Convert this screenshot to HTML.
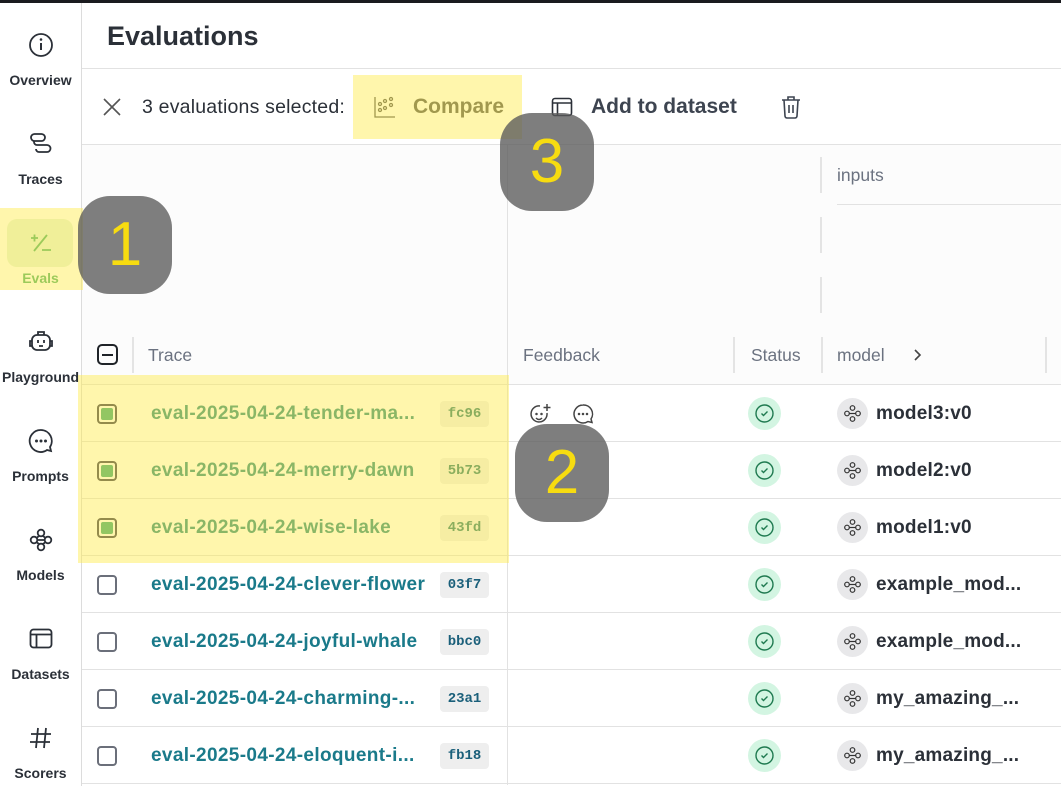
<!DOCTYPE html>
<html><head><meta charset="utf-8"><style>
*{box-sizing:border-box;margin:0;padding:0}
body{width:1061px;height:786px;overflow:hidden;background:#fff;font-family:"Liberation Sans",sans-serif;position:relative;color:#2b3038}
.abs{position:absolute}
.top{left:0;top:0;width:1061px;height:3px;background:#1a1b1f}
.side{left:0;top:3px;width:82px;height:783px;border-right:1px solid #dcdcdc}
.nav{position:absolute;left:0;width:81px;text-align:center;font-size:14px;font-weight:bold;color:#2b3038}
.nav svg{display:block;margin:0 auto 14px}
.hline{position:absolute;height:1px;background:#e2e2e2}
.vline{position:absolute;width:2px;background:#e4e4e4}
.hdr{font-size:17.5px;color:#6b7280}
.row{position:absolute;left:82px;width:979px;height:57px;border-bottom:1px solid #e2e2e2}
.cb{position:absolute;left:97px;width:20px;height:20px;border:2px solid #6b6f7a;border-radius:4px}
.name{position:absolute;left:151px;font-size:19px;letter-spacing:0.35px;font-weight:bold;color:#1a7a8a}
.tag{position:absolute;left:440px;width:49px;height:26px;background:#eeeeee;border-radius:4px;font-family:"Liberation Mono",monospace;font-size:14px;font-weight:bold;color:#1a5f7a;text-align:center;line-height:26px}
.st{position:absolute;left:748px;width:33px;height:33px;border-radius:50%;background:#d3f5e2}
.mi{position:absolute;left:837px;width:31px;height:31px;border-radius:50%;background:#e8e8ea}
.mn{position:absolute;left:876px;font-size:19px;letter-spacing:0.2px;font-weight:bold;color:#2b3038}
.hl{position:absolute;background:rgba(255,234,70,0.45)}
.badge{position:absolute;width:94px;height:98px;border-radius:32px;background:rgba(90,90,90,0.78);color:#f7dc10;font-size:62px;text-align:center;line-height:98px}
</style></head><body>
<div class="abs top"></div>
<div class="abs side"></div>

<div class="nav" style="top:32px"><svg width="26" height="26" viewBox="0 0 26 26"><circle cx="13" cy="13" r="11" fill="none" stroke="#2b3038" stroke-width="1.8"/><line x1="13" y1="11" x2="13" y2="18" stroke="#2b3038" stroke-width="2"/><circle cx="13" cy="7.5" r="1.3" fill="#2b3038"/></svg>Overview</div>
<div class="nav" style="top:131px"><svg width="26" height="26" viewBox="0 0 26 26" fill="none" stroke="#2b3038" stroke-width="1.8"><rect x="3" y="3" width="14" height="7" rx="3.5"/><path d="M6 10v1a3 3 0 0 0 3 3h10a3.5 3.5 0 0 1 0 7H11a3 3 0 0 1-3-3"/></svg>Traces</div>
<div class="abs" style="left:7px;top:219px;width:66px;height:48px;border-radius:10px;background:#e3f3dc"></div>
<div class="nav" style="top:230px;color:#4caf6a"><svg width="26" height="26" viewBox="0 0 26 26" fill="none" stroke="#4caf6a" stroke-width="1.8"><path d="M3 8h7M6.5 4.5v7M19 5L6 21M14 20h9"/></svg>Evals</div>
<div class="nav" style="top:329px"><svg width="28" height="26" viewBox="0 0 28 26" fill="none" stroke="#2b3038" stroke-width="1.8"><rect x="5" y="6" width="18" height="15" rx="5"/><path d="M11 6V3h6v3M5 12H3v5h2M23 12h2v5h-2M11 11v3M17 11v3M12 17h4"/></svg>Playground</div>
<div class="nav" style="top:428px"><svg width="26" height="26" viewBox="0 0 26 26" fill="none" stroke="#2b3038" stroke-width="1.8"><path d="M13 2a11 11 0 1 0 6 20l4 1-1-4A11 11 0 0 0 13 2z"/><circle cx="8.5" cy="13" r="0.6" fill="#2b3038"/><circle cx="13" cy="13" r="0.6" fill="#2b3038"/><circle cx="17.5" cy="13" r="0.6" fill="#2b3038"/></svg>Prompts</div>
<div class="nav" style="top:527px"><svg width="26" height="26" viewBox="0 0 26 26" fill="none" stroke="#2b3038" stroke-width="1.8"><circle cx="13" cy="6" r="3.3"/><circle cx="13" cy="20" r="3.3"/><circle cx="6" cy="13" r="3.3"/><circle cx="20" cy="13" r="3.3"/><path d="M9.3 13h7.4M11 9l-2 1.5M15 9l2 1.5M11 17l-2-1.5M15 17l2-1.5"/></svg>Models</div>
<div class="nav" style="top:626px"><svg width="26" height="26" viewBox="0 0 26 26" fill="none" stroke="#2b3038" stroke-width="1.8"><rect x="2.5" y="3.5" width="21" height="18" rx="3"/><path d="M2.5 8.5h21M8.5 8.5v13"/></svg>Datasets</div>
<div class="nav" style="top:725px"><svg width="26" height="26" viewBox="0 0 26 26" fill="none" stroke="#2b3038" stroke-width="1.8"><path d="M10 3L8 23M18 3l-2 20M3 9h20M2 17h20"/></svg>Scorers</div>

<div class="abs" style="left:107px;top:21px;font-size:27px;font-weight:bold;color:#2b3038">Evaluations</div>
<div class="hline" style="left:82px;top:68px;width:979px"></div>

<svg class="abs" style="left:102px;top:97px" width="20" height="20" viewBox="0 0 20 20"><path d="M2 2l16 16M18 2L2 18" stroke="#555" stroke-width="1.6"/></svg>
<div class="abs" style="left:142px;top:96px;font-size:19.5px;color:#2b3038;letter-spacing:0.2px">3 evaluations selected:</div>
<svg class="abs" style="left:373px;top:95px" width="24" height="24" viewBox="0 0 24 24" fill="none" stroke="#555" stroke-width="1.3"><path d="M2 2v20h20"/><circle cx="7" cy="15" r="1.5"/><circle cx="12" cy="13" r="1.5"/><circle cx="7" cy="9" r="1.5"/><circle cx="12" cy="6" r="1.5"/><circle cx="18" cy="10" r="1.5"/><circle cx="18" cy="4" r="1.5"/></svg>
<div class="abs" style="left:413px;top:95px;font-size:21px;font-weight:bold;color:#555">Compare</div>
<svg class="abs" style="left:551px;top:96px" width="22" height="22" viewBox="0 0 22 22" fill="none" stroke="#2b3038" stroke-width="1.6"><rect x="1.5" y="2.5" width="19" height="17" rx="2.5"/><path d="M1.5 7h19M6.5 7v12.5"/></svg>
<div class="abs" style="left:591px;top:95px;font-size:21px;font-weight:bold;color:#3d4450">Add to dataset</div>
<svg class="abs" style="left:780px;top:95px" width="22" height="24" viewBox="0 0 22 24" fill="none" stroke="#3d4450" stroke-width="1.6"><path d="M2 5h18M8 5V2h6v3M4 5l1 16a2 2 0 0 0 2 2h8a2 2 0 0 0 2-2l1-16M9 10v8M13 10v8"/></svg>
<div class="hline" style="left:82px;top:144px;width:979px"></div>

<div class="abs" style="left:82px;top:145px;width:979px;height:240px;background:#fcfcfc"></div>
<div class="abs" style="left:507px;top:145px;width:1px;height:640px;background:#e2e2e2"></div>
<div class="vline" style="left:820px;top:157px;height:36px"></div>
<div class="abs hdr" style="left:837px;top:165px">inputs</div>
<div class="hline" style="left:837px;top:204px;width:224px"></div>
<div class="vline" style="left:820px;top:217px;height:36px"></div>
<div class="vline" style="left:820px;top:277px;height:36px"></div>
<div class="abs" style="left:97px;top:344px;width:21px;height:21px;border:2px solid #1f2328;border-radius:5px"><div style="position:absolute;left:3px;top:7.5px;width:11px;height:2px;background:#1f2328"></div></div>
<div class="vline" style="left:132px;top:337px;height:36px"></div>
<div class="abs hdr" style="left:148px;top:345px">Trace</div>
<div class="abs hdr" style="left:523px;top:345px">Feedback</div>
<div class="vline" style="left:733px;top:337px;height:36px"></div>
<div class="abs hdr" style="left:751px;top:345px">Status</div>
<div class="vline" style="left:821px;top:337px;height:36px"></div>
<div class="abs hdr" style="left:837px;top:345px">model</div>
<svg class="abs" style="left:912px;top:348px" width="12" height="14" viewBox="0 0 12 14"><path d="M3 2l5 5-5 5" fill="none" stroke="#444" stroke-width="1.6"/></svg>
<div class="vline" style="left:1045px;top:337px;height:36px"></div>
<div class="hline" style="left:82px;top:384px;width:979px"></div>

<div class="row" style="top:385px"></div>
<div class="row" style="top:442px"></div>
<div class="row" style="top:499px"></div>
<div class="row" style="top:556px"></div>
<div class="row" style="top:613px"></div>
<div class="row" style="top:670px"></div>
<div class="row" style="top:727px"></div>

<div class="cb" style="top:404px;border-color:#3c3c50"><div style="position:absolute;left:2px;top:2px;width:12px;height:12px;border-radius:2px;background:#3aa878"></div></div>
<div class="name" style="top:403px;color:#2a8a80">eval-2025-04-24-tender-ma...</div>
<div class="tag" style="top:401px;color:#2a7a70">fc96</div>
<div class="cb" style="top:461px;border-color:#3c3c50"><div style="position:absolute;left:2px;top:2px;width:12px;height:12px;border-radius:2px;background:#3aa878"></div></div>
<div class="name" style="top:460px;color:#2a8a80">eval-2025-04-24-merry-dawn</div>
<div class="tag" style="top:458px;color:#2a7a70">5b73</div>
<div class="cb" style="top:518px;border-color:#3c3c50"><div style="position:absolute;left:2px;top:2px;width:12px;height:12px;border-radius:2px;background:#3aa878"></div></div>
<div class="name" style="top:517px;color:#2a8a80">eval-2025-04-24-wise-lake</div>
<div class="tag" style="top:515px;color:#2a7a70">43fd</div>

<div class="cb" style="top:575px"></div><div class="name" style="top:574px">eval-2025-04-24-clever-flower</div><div class="tag" style="top:572px">03f7</div>
<div class="cb" style="top:632px"></div><div class="name" style="top:631px">eval-2025-04-24-joyful-whale</div><div class="tag" style="top:629px">bbc0</div>
<div class="cb" style="top:689px"></div><div class="name" style="top:688px">eval-2025-04-24-charming-...</div><div class="tag" style="top:686px">23a1</div>
<div class="cb" style="top:746px"></div><div class="name" style="top:745px">eval-2025-04-24-eloquent-i...</div><div class="tag" style="top:743px">fb18</div>

<svg class="abs" style="left:529px;top:402px" width="24" height="24" viewBox="0 0 24 24" fill="none" stroke="#444" stroke-width="1.5"><path d="M18 11a8 8 0 1 1-7-7"/><path d="M18 2v7M14.5 5.5h7"/><circle cx="7.5" cy="12" r="0.5" fill="#444"/><circle cx="12.5" cy="12" r="0.5" fill="#444"/><path d="M7 16q3 3 6 0"/></svg>
<svg class="abs" style="left:572px;top:403px" width="22" height="22" viewBox="0 0 22 22" fill="none" stroke="#444" stroke-width="1.5"><path d="M11 2a9 9 0 1 0 5 16.5l4 1-1-3.5A9 9 0 0 0 11 2z"/><circle cx="7" cy="11" r="0.5" fill="#444"/><circle cx="11" cy="11" r="0.5" fill="#444"/><circle cx="15" cy="11" r="0.5" fill="#444"/></svg>

<div id="sm"></div>
<script>
var names=["model3:v0","model2:v0","model1:v0","example_mod...","example_mod...","my_amazing_...","my_amazing_..."];
var h="";
for(var i=0;i<7;i++){var t=385+57*i;
h+='<div class="st" style="top:'+(t+12)+'px"><svg width="33" height="33" viewBox="0 0 33 33" fill="none" stroke="#1f7a50" stroke-width="1.4"><circle cx="16.5" cy="16.5" r="8.5"/><path d="M13.5 16.5l2 2 4-4"/></svg></div>';
h+='<div class="mi" style="top:'+(t+13)+'px"><svg width="31" height="31" viewBox="0 0 31 31" fill="none" stroke="#333" stroke-width="1.2"><circle cx="15.5" cy="10" r="2.3"/><circle cx="15.5" cy="21" r="2.3"/><circle cx="10" cy="15.5" r="2.3"/><circle cx="21" cy="15.5" r="2.3"/><path d="M12.3 15.5h6.4"/></svg></div>';
h+='<div class="mn" style="top:'+(t+18)+'px">'+names[i]+'</div>';}
document.getElementById("sm").innerHTML=h;
</script>

<div class="hl" style="left:353px;top:75px;width:169px;height:64px"></div>
<div class="hl" style="left:0;top:208px;width:83px;height:82px"></div>
<div class="hl" style="left:78px;top:375px;width:431px;height:188px"></div>

<div class="badge" style="left:78px;top:196px">1</div>
<div class="badge" style="left:515px;top:424px">2</div>
<div class="badge" style="left:500px;top:113px">3</div>
</body></html>
